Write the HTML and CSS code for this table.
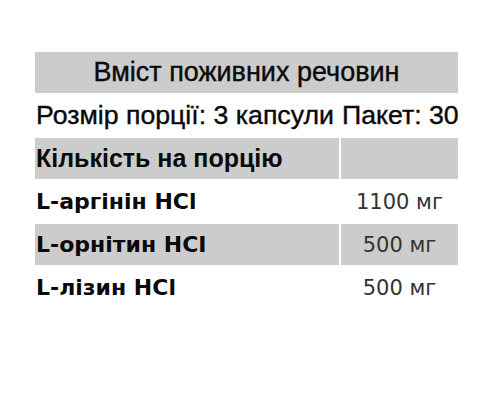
FILE: index.html
```html
<!DOCTYPE html>
<html lang="uk">
<head>
<meta charset="utf-8">
<link rel="stylesheet" href="styles.css">
</head>
<body>
<table class="facts">
  <colgroup>
    <col class="col-name">
    <col class="col-val">
  </colgroup>
  <tr class="shade">
    <th class="title" colspan="2">Вміст поживних речовин</th>
  </tr>
  <tr>
    <td class="info">Розмір порції: 3 капсули</td>
    <td class="info">Пакет: 30</td>
  </tr>
  <tr class="shade">
    <td class="info strong">Кількість на порцію</td>
    <td></td>
  </tr>
  <tr>
    <td class="name">L-аргінін HCl</td>
    <td class="val">1100 мг</td>
  </tr>
  <tr class="shade">
    <td class="name">L-орнітин HCI</td>
    <td class="val">500 мг</td>
  </tr>
  <tr>
    <td class="name">L-лізин HCl</td>
    <td class="val">500 мг</td>
  </tr>
</table>
</body>
</html>
```
FILE: styles.css
```css
html, body {
  margin: 0;
  padding: 0;
  background: #fff;
}
body {
  padding: 50px 0 0 33px;
}
.facts {
  border-collapse: separate;
  border-spacing: 2px;
  table-layout: fixed;
  width: 427px;
  font-family: "Liberation Sans", Arial, sans-serif;
  color: #0a0a0a;
}
.col-name {
  width: 304px;
}
.col-val {
  width: 117px;
}
.facts td, .facts th {
  height: 41px;
  padding: 0 1px;
  box-sizing: border-box;
  white-space: nowrap;
  overflow: visible;
}
.shade td, .shade th {
  background: #cccccc;
}
.title {
  font-size: 27px;
  font-weight: normal;
  text-align: center;
  -webkit-text-stroke: 0.4px #0a0a0a;
}
.info {
  font-size: 26.7px;
  text-align: left;
  -webkit-text-stroke: 0.4px #0a0a0a;
}
.strong {
  font-weight: bold;
  font-size: 25px;
  -webkit-text-stroke: 0;
}
.name {
  font-family: "DejaVu Sans", sans-serif;
  font-weight: bold;
  font-size: 22px;
  text-align: left;
}
.val {
  font-family: "DejaVu Sans", sans-serif;
  font-size: 21px;
  color: #333;
  text-align: center;
}
```
